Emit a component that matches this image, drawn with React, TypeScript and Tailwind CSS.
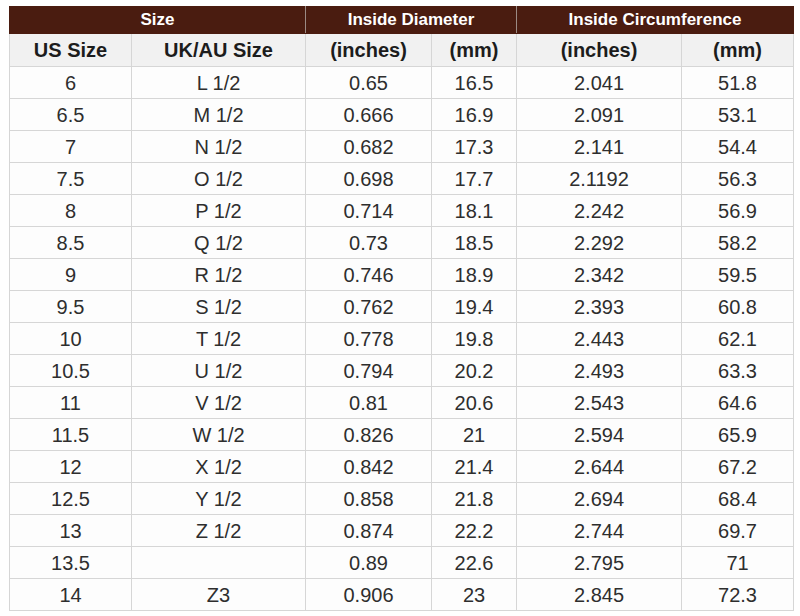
import React from 'react'

type Row = [string, string, string, string, string, string]

const rows: Row[] = [
  ['6', 'L 1/2', '0.65', '16.5', '2.041', '51.8'],
  ['6.5', 'M 1/2', '0.666', '16.9', '2.091', '53.1'],
  ['7', 'N 1/2', '0.682', '17.3', '2.141', '54.4'],
  ['7.5', 'O 1/2', '0.698', '17.7', '2.1192', '56.3'],
  ['8', 'P 1/2', '0.714', '18.1', '2.242', '56.9'],
  ['8.5', 'Q 1/2', '0.73', '18.5', '2.292', '58.2'],
  ['9', 'R 1/2', '0.746', '18.9', '2.342', '59.5'],
  ['9.5', 'S 1/2', '0.762', '19.4', '2.393', '60.8'],
  ['10', 'T 1/2', '0.778', '19.8', '2.443', '62.1'],
  ['10.5', 'U 1/2', '0.794', '20.2', '2.493', '63.3'],
  ['11', 'V 1/2', '0.81', '20.6', '2.543', '64.6'],
  ['11.5', 'W 1/2', '0.826', '21', '2.594', '65.9'],
  ['12', 'X 1/2', '0.842', '21.4', '2.644', '67.2'],
  ['12.5', 'Y 1/2', '0.858', '21.8', '2.694', '68.4'],
  ['13', 'Z 1/2', '0.874', '22.2', '2.744', '69.7'],
  ['13.5', '', '0.89', '22.6', '2.795', '71'],
  ['14', 'Z3', '0.906', '23', '2.845', '72.3'],
]

const subHeads = ['US Size', 'UK/AU Size', '(inches)', '(mm)', '(inches)', '(mm)']

const App = () => {
  return (
    <div className="w-[800px] h-[616px] bg-white pt-[6px] pl-[9px] overflow-hidden font-['Liberation_Sans',Arial,sans-serif]">
      <table className="w-[784px] table-fixed border-collapse">
        <colgroup>
          <col className="w-[122px]" />
          <col className="w-[174px]" />
          <col className="w-[126px]" />
          <col className="w-[85px]" />
          <col className="w-[165px]" />
          <col className="w-[112px]" />
        </colgroup>
        <thead>
          {/* Top header */}
          <tr className="h-[27px] bg-[#4a1c10] text-white text-[17px] font-bold">
            <th colSpan={2} className="border border-[#4a1c10] border-r-[#9b8a84] p-0">Size</th>
            <th colSpan={2} className="border border-[#4a1c10] border-r-[#9b8a84] p-0">Inside Diameter</th>
            <th colSpan={2} className="border border-[#4a1c10] p-0">Inside Circumference</th>
          </tr>
          {/* Sub header */}
          <tr className="h-[33px] bg-[#f1f1f1] text-[#1c1c1c] text-[20px] font-bold">
            {subHeads.map((h, i) => (
              <th key={i} className="border border-[#d6d6d6] p-0 leading-none">{h}</th>
            ))}
          </tr>
        </thead>
        <tbody>
          {rows.map((r, i) => (
            <tr key={i} className="h-[32px] bg-[#fdfdfd] text-[#2e2e2e] text-[20px]">
              {r.map((c, j) => (
                <td key={j} className="border border-[#d6d6d6] p-0 text-center leading-none">{c}</td>
              ))}
            </tr>
          ))}
        </tbody>
      </table>
    </div>
  )
}

export default App
